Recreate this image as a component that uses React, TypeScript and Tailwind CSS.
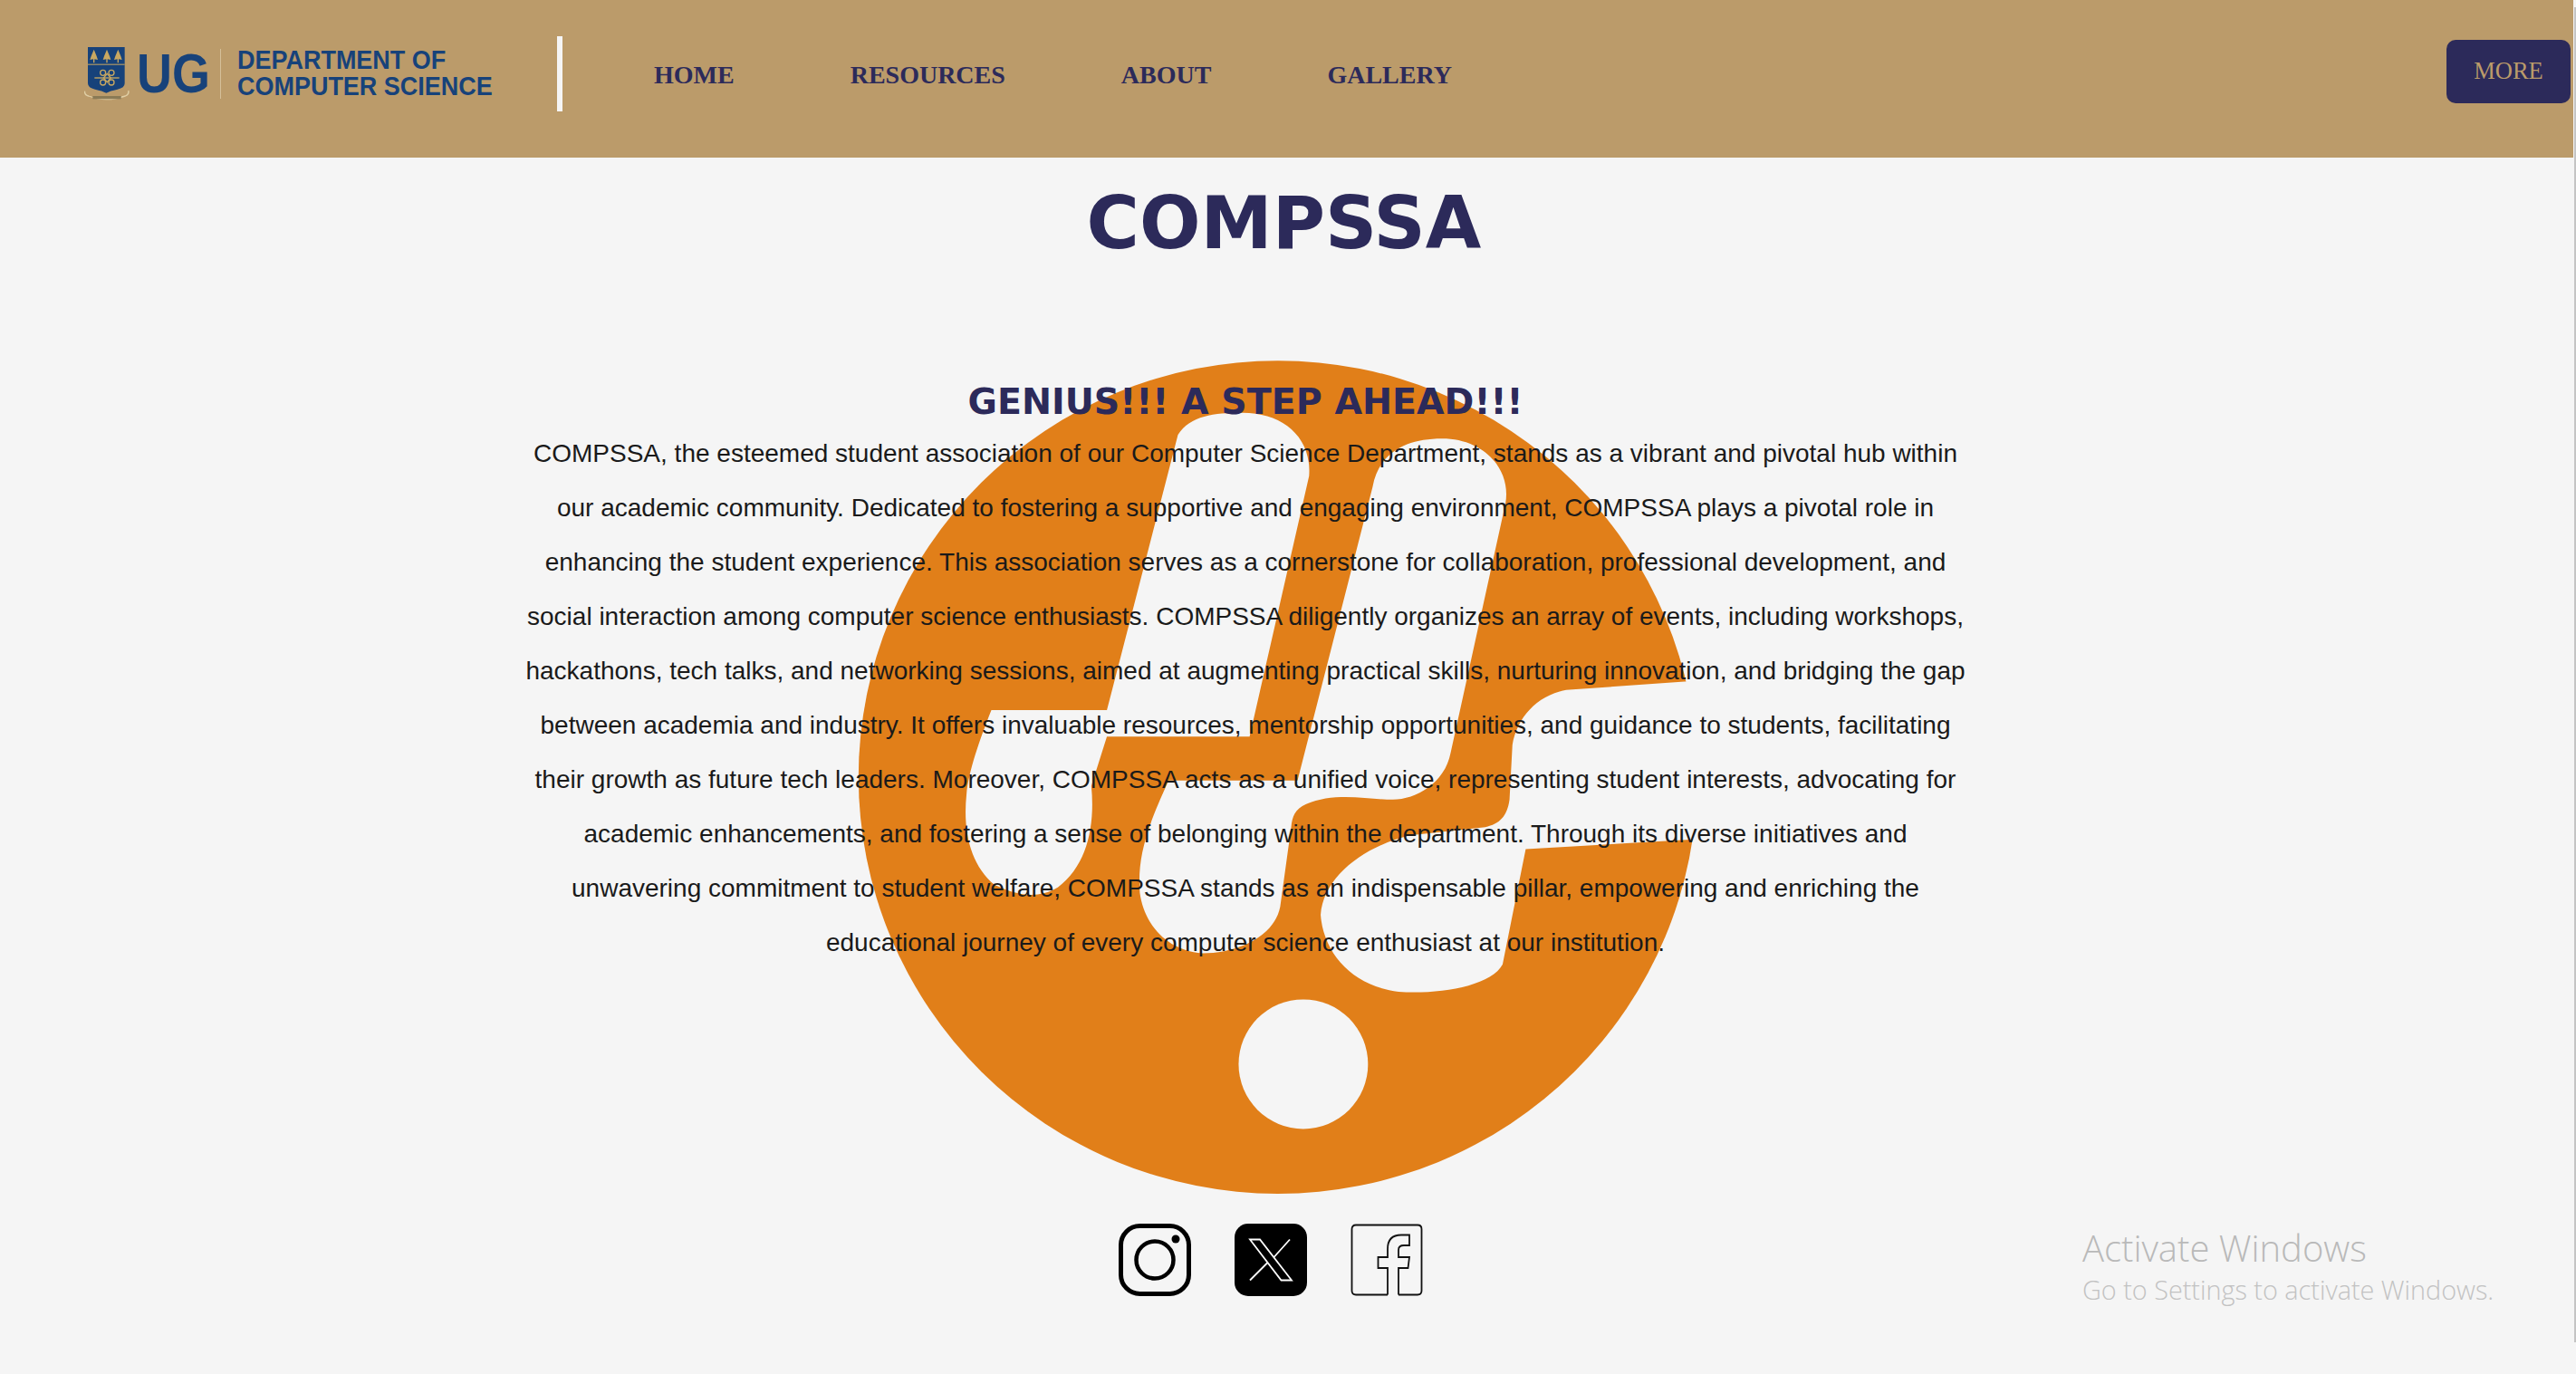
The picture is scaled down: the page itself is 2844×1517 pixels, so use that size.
const lines = [
  "COMPSSA, the esteemed student association of our Computer Science Department, stands as a vibrant and pivotal hub within",
  "our academic community. Dedicated to fostering a supportive and engaging environment, COMPSSA plays a pivotal role in",
  "enhancing the student experience. This association serves as a cornerstone for collaboration, professional development, and",
  "social interaction among computer science enthusiasts. COMPSSA diligently organizes an array of events, including workshops,",
  "hackathons, tech talks, and networking sessions, aimed at augmenting practical skills, nurturing innovation, and bridging the gap",
  "between academia and industry. It offers invaluable resources, mentorship opportunities, and guidance to students, facilitating",
  "their growth as future tech leaders. Moreover, COMPSSA acts as a unified voice, representing student interests, advocating for",
  "academic enhancements, and fostering a sense of belonging within the department. Through its diverse initiatives and",
  "unwavering commitment to student welfare, COMPSSA stands as an indispensable pillar, empowering and enriching the",
  "educational journey of every computer science enthusiast at our institution.",
];

const Shield = () => (
  <svg viewBox="0 0 150 177" className="w-[50px] h-[59px] shrink-0">
    <path d="M12 0H134V120Q134 135 110 140Q85 145 73 152Q60 145 36 140Q12 135 12 120Z" fill="#17427a" />
    <rect x="12" y="56" width="122" height="3" fill="#c9a861" />
    {[32, 75, 112].map((x) => (
      <path
        key={x}
        d={`M${x} 8L${x + 5} 20L${x + 9} 30L${x + 13} 42L${x + 2} 40V52H${x - 2}V40L${x - 13} 42L${x - 9} 30L${x - 5} 20Z`}
        fill="#c9a861"
      />
    ))}
    <g fill="none" stroke="#c9a861" strokeWidth="4">
      <path d="M34 102H116" />
      <circle cx="62" cy="85" r="9" />
      <circle cx="90" cy="85" r="9" />
      <circle cx="62" cy="117" r="9" />
      <circle cx="90" cy="117" r="9" />
      <path d="M76 88L88 102L76 116L64 102Z" />
    </g>
    <path d="M2 146Q0 158 14 162Q72 184 136 162Q150 156 146 144" fill="none" stroke="#e0cfa5" strokeWidth="4" />
    <path d="M28 162H122V172H28Z" fill="#8a7a55" />
  </svg>
);

const Instagram = () => (
  <svg viewBox="0 0 80 80" className="w-20 h-20">
    <rect x="2.5" y="2.5" width="75" height="75" rx="21" fill="none" stroke="#000" strokeWidth="5" />
    <circle cx="40" cy="40" r="20.5" fill="none" stroke="#000" strokeWidth="4.5" />
    <circle cx="63" cy="17" r="4.5" fill="#000" />
  </svg>
);

const XIcon = () => (
  <svg viewBox="0 0 80 80" className="w-20 h-20">
    <rect width="80" height="80" rx="15" fill="#000" />
    <path
      d="M17 17.5H28L63 62.5H51.5ZM61 17.5L43.5 37M36 43.5L17 62.5"
      fill="none"
      stroke="#fff"
      strokeWidth="1.8"
    />
  </svg>
);

const Facebook = () => (
  <svg viewBox="0 0 80 80" className="w-20 h-20">
    <path
      d="M41 78.5V49H30.5V37H41V28C41 16.5 47 12.5 56 12.5H65V24H59C55 24 53 25.5 53 29V37H65L63.5 49H53V78.5M41 78.5H6Q1.5 78.5 1.5 74V6Q1.5 1.5 6 1.5H74Q78.5 1.5 78.5 6V74Q78.5 78.5 74 78.5H53"
      fill="none"
      stroke="#111"
      strokeWidth="1.8"
    />
  </svg>
);

export default function App() {
  return (
    <div className="relative min-h-screen overflow-hidden bg-[#f5f5f5] pr-[3px] font-['Liberation_Sans',sans-serif]">
      {/* logo watermark behind the paragraph */}
      <svg
        viewBox="0 0 1568 1568"
        preserveAspectRatio="none"
        className="absolute left-[900px] top-[380px] w-[1000px] h-[950px]"
      >
        <ellipse cx="801" cy="789" rx="726" ry="759" fill="#e17f19" />
        <g fill="#f5f5f5">
          <path d="M628 165C650 130 690 125 740 125C810 125 860 170 855 240L752 715H505L478 805C485 880 470 950 420 990C380 1015 340 1000 310 985C270 950 255 890 262 820C265 780 285 720 305 667H505Z" />
          <path d="M965 260C975 200 1020 172 1085 172C1160 172 1205 230 1195 290L1100 745C1090 800 1040 830 1000 830C960 830 900 815 850 838C830 848 826 860 824 880L805 1025C795 1080 730 1110 670 1110C610 1105 570 1060 562 1000C558 940 570 890 612 795H835Z" />
          <path d="M1505 615L1300 630C1250 640 1215 680 1207 730L1202 830C1198 860 1185 875 1160 880L1030 895C950 915 880 970 875 1040C880 1110 930 1170 1010 1180C1080 1185 1170 1170 1190 1130L1230 920L1515 903L1600 903V615Z" />
          <ellipse cx="845" cy="1312" rx="112" ry="118" />
        </g>
      </svg>

      <header className="relative flex h-[174px] items-center bg-[#bb9b6a] pb-3 pr-[3px]">
        <div className="ml-[93px] flex items-center">
          <Shield />
          <span className="ml-[8px] w-[78px] origin-left scale-x-[0.87] text-[62px] font-bold leading-none text-[#17427a]">UG</span>
          <span className="ml-[14px] h-[55px] w-px bg-[#d5c09a]" />
          <div className="ml-[18px] w-[280px] origin-left scale-x-[0.93] whitespace-nowrap text-[29px] font-bold leading-[29px] text-[#17427a]">
            <div>DEPARTMENT OF</div>
            <div>COMPUTER SCIENCE</div>
          </div>
        </div>
        <span className="ml-[73px] h-[83px] w-1.5 bg-[#f5f5f5]" />
        <nav className="ml-[101px] flex gap-[128px] pt-[3px] font-['Liberation_Serif',serif] text-[28px] font-bold text-[#2c2a5a]">
          <a>HOME</a>
          <a>RESOURCES</a>
          <a>ABOUT</a>
          <a>GALLERY</a>
        </nav>
        <button className="ml-auto mb-1 h-[70px] w-[137px] rounded-[10px] bg-[#2c2a5a] font-['Liberation_Serif',serif] text-[26.5px] text-[#bb9b6a]">
          MORE
        </button>
      </header>

      <main className="relative">
        <h1 className="pt-[28px] pr-1.5 text-center font-['DejaVu_Sans',sans-serif] text-[79.5px] font-bold leading-[90px] text-[#2c2a5a]">
          COMPSSA
        </h1>
        <section className="ml-[565px] w-[1620px] pt-[127px] text-center">
          <h2 className="font-['DejaVu_Sans',sans-serif] text-[39.5px] font-bold leading-[48px] text-[#2c2a5a]">
            GENIUS!!! A STEP AHEAD!!!
          </h2>
          <p className="mt-[4px] text-[28px] leading-[60px] text-[#1a1a1a]">
            {lines.map((line) => (
              <span key={line} className="block whitespace-nowrap">{line}</span>
            ))}
          </p>
        </section>
        <div className="mt-[280px] ml-[1235px] flex gap-12">
          <Instagram />
          <XIcon />
          <Facebook />
        </div>
      </main>

      <div className="absolute left-[2299px] top-[1351px] font-['Open_Sans',sans-serif] font-light text-[#b9b9b9]">
        <div className="text-[40px] leading-[54px]">Activate Windows</div>
        <div className="text-[28.8px] leading-[38px] text-[#c2c2c2]">Go to Settings to activate Windows.</div>
      </div>
      <div className="absolute right-0 top-2 h-[1474px] w-0.5 bg-[#c4c4c4]" />
    </div>
  );
}
